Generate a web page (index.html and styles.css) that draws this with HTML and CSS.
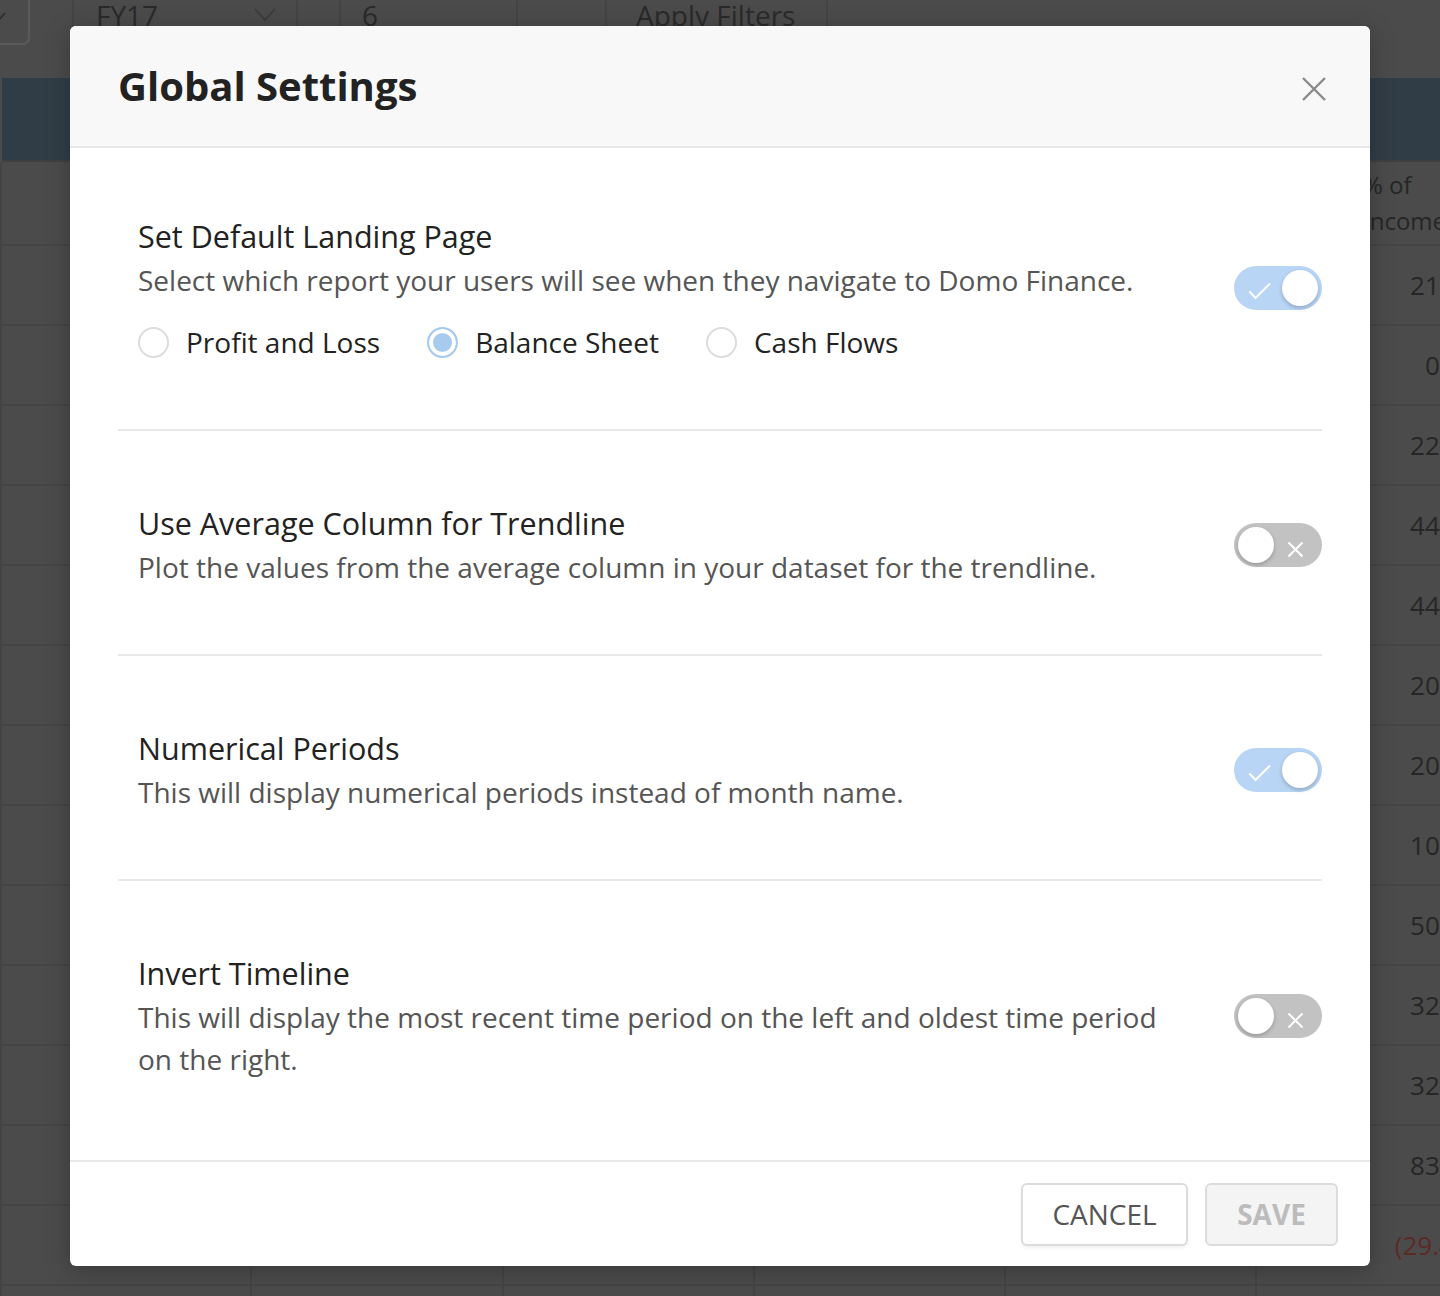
FILE: index.html
```html
<!DOCTYPE html>
<html lang="en">
<head>
<meta charset="utf-8">
<title>Global Settings</title>
<link rel="stylesheet" href="styles.css">
</head>
<body>
<div class="app">
  <div class="filters">
    <div class="f f-first"><div class="ddbox"><svg class="ddchev" width="14" height="10" viewBox="0 0 14 10"><path d="M1 1 L7 8 L13 1" fill="none" stroke="#2c2c2c" stroke-width="1.6"/></svg></div></div>
    <div class="f f-fy"><span class="ftext">FY17</span><svg class="fychev" width="22" height="14" viewBox="0 0 22 14"><path d="M1 1 L11 12 L21 1" fill="none" stroke="#3a3a3a" stroke-width="1.6"/></svg></div>
    <div class="f f-gap"></div>
    <div class="f f-num"><span class="ftext">6</span></div>
    <div class="f f-gap2"></div>
    <div class="f f-apply"><span class="ftext">Apply Filters</span></div>
  </div>
  <div class="tbar"></div>
  <div class="tbl">
    <div class="trow thead"><div class="c"></div><div class="c"></div><div class="c"></div><div class="c"></div><div class="c"></div><div class="c last head-cell">% of<br>Income</div></div>
    <div class="trow"><div class="c"></div><div class="c"></div><div class="c"></div><div class="c"></div><div class="c"></div><div class="c last">21.4%</div></div>
    <div class="trow"><div class="c"></div><div class="c"></div><div class="c"></div><div class="c"></div><div class="c"></div><div class="c last">0.2%</div></div>
    <div class="trow"><div class="c"></div><div class="c"></div><div class="c"></div><div class="c"></div><div class="c"></div><div class="c last">22.1%</div></div>
    <div class="trow"><div class="c"></div><div class="c"></div><div class="c"></div><div class="c"></div><div class="c"></div><div class="c last">44.3%</div></div>
    <div class="trow"><div class="c"></div><div class="c"></div><div class="c"></div><div class="c"></div><div class="c"></div><div class="c last">44.0%</div></div>
    <div class="trow"><div class="c"></div><div class="c"></div><div class="c"></div><div class="c"></div><div class="c"></div><div class="c last">20.5%</div></div>
    <div class="trow"><div class="c"></div><div class="c"></div><div class="c"></div><div class="c"></div><div class="c"></div><div class="c last">20.8%</div></div>
    <div class="trow"><div class="c"></div><div class="c"></div><div class="c"></div><div class="c"></div><div class="c"></div><div class="c last">10.2%</div></div>
    <div class="trow"><div class="c"></div><div class="c"></div><div class="c"></div><div class="c"></div><div class="c"></div><div class="c last">50.6%</div></div>
    <div class="trow"><div class="c"></div><div class="c"></div><div class="c"></div><div class="c"></div><div class="c"></div><div class="c last">32.3%</div></div>
    <div class="trow"><div class="c"></div><div class="c"></div><div class="c"></div><div class="c"></div><div class="c"></div><div class="c last">32.7%</div></div>
    <div class="trow"><div class="c"></div><div class="c"></div><div class="c"></div><div class="c"></div><div class="c"></div><div class="c last">83.1%</div></div>
    <div class="trow"><div class="c"></div><div class="c"></div><div class="c"></div><div class="c"></div><div class="c"></div><div class="c last neg">(29.4%)</div></div>
    <div class="trow"><div class="c"></div><div class="c"></div><div class="c"></div><div class="c"></div><div class="c"></div><div class="c last"></div></div>
  </div>
</div>

<div class="modal">
  <div class="modal-header">
    <h1 class="modal-title">Global Settings</h1>
    <svg class="close" width="26" height="26" viewBox="0 0 26 26"><path d="M2 2 L24 24 M24 2 L2 24" stroke="#8a8a8a" stroke-width="2.4" fill="none"/></svg>
  </div>
  <div class="modal-body">
    <div class="setting">
      <div class="setting-text">
        <div class="setting-title">Set Default Landing Page</div>
        <div class="setting-desc">Select which report your users will see when they navigate to Domo Finance.</div>
        <div class="radios">
          <div class="radio"><span class="radio-circle"></span><span>Profit and Loss</span></div>
          <div class="radio"><span class="radio-circle checked"></span><span>Balance Sheet</span></div>
          <div class="radio"><span class="radio-circle"></span><span>Cash Flows</span></div>
        </div>
      </div>
      <div class="toggle on"><svg class="tg-icon tg-check" width="24" height="18" viewBox="0 0 24 18"><path d="M1.5 9.5 L7.5 16 L22 1.5" fill="none" stroke="#fff" stroke-width="2"/></svg><span class="knob"></span></div>
    </div>
    <div class="setting">
      <div class="setting-text">
        <div class="setting-title">Use Average Column for Trendline</div>
        <div class="setting-desc">Plot the values from the average column in your dataset for the trendline.</div>
      </div>
      <div class="toggle off"><span class="knob"></span><svg class="tg-icon tg-x" width="17" height="17" viewBox="0 0 17 17"><path d="M1.5 1.5 L15.5 15.5 M15.5 1.5 L1.5 15.5" fill="none" stroke="#fff" stroke-width="2"/></svg></div>
    </div>
    <div class="setting">
      <div class="setting-text">
        <div class="setting-title">Numerical Periods</div>
        <div class="setting-desc">This will display numerical periods instead of month name.</div>
      </div>
      <div class="toggle on"><svg class="tg-icon tg-check" width="24" height="18" viewBox="0 0 24 18"><path d="M1.5 9.5 L7.5 16 L22 1.5" fill="none" stroke="#fff" stroke-width="2"/></svg><span class="knob"></span></div>
    </div>
    <div class="setting">
      <div class="setting-text">
        <div class="setting-title">Invert Timeline</div>
        <div class="setting-desc">This will display the most recent time period on the left and oldest time period on the right.</div>
      </div>
      <div class="toggle off"><span class="knob"></span><svg class="tg-icon tg-x" width="17" height="17" viewBox="0 0 17 17"><path d="M1.5 1.5 L15.5 15.5 M15.5 1.5 L1.5 15.5" fill="none" stroke="#fff" stroke-width="2"/></svg></div>
    </div>
  </div>
  <div class="modal-footer">
    <button class="btn btn-cancel">Cancel</button>
    <button class="btn btn-save">Save</button>
  </div>
</div>
</body>
</html>
```
FILE: styles.css
```css
* { box-sizing: border-box; }
html, body { margin: 0; padding: 0; }
body {
  width: 1440px;
  height: 1296px;
  overflow: hidden;
  position: relative;
  background: #4b4b4b;
  font-family: "Open Sans", "Noto Sans", sans-serif;
}

/* ---------- dimmed background page ---------- */
.app { width: 1440px; height: 1296px; overflow: hidden; }
.filters { display: flex; height: 78px; }
.f {
  height: 46px;
  border-right: 2px solid #444;
  display: flex;
  align-items: flex-start;
  font-size: 28px;
  line-height: 30px;
  color: #2a2a2a;
}
.f-first { width: 74px; }
.ddbox {
  width: 30px;
  height: 45px;
  border: 2px solid #5a5a5a;
  border-left: none;
  border-top: none;
  border-bottom-right-radius: 7px;
  position: relative;
  overflow: hidden;
}
.ddchev { position: absolute; left: -8px; top: 12px; }
.f-fy { width: 224px; padding-left: 22px; }
.fychev { margin-left: 96px; margin-top: 8px; }
.f-gap { width: 43px; }
.f-num { width: 177px; padding-left: 21px; }
.f-gap2 { width: 89px; }
.f-apply { width: 221px; padding-left: 29px; }

.tbar {
  height: 84px;
  margin-left: 2px;
  background: #313d46;
  border-bottom: 2px solid #404040;
}
.tbl { border-left: 2px solid #444; }
.trow { display: flex; height: 80px; border-bottom: 2px solid #444; }
.trow.thead { height: 84px; }
.c { border-right: 2px solid #444; width: 251px; flex-shrink: 0; }
.c:first-child { width: 250px; }
.c:nth-child(2) { width: 252px; }
.c.last {
  width: 262px;
  display: flex;
  align-items: center;
  justify-content: flex-end;
  padding-right: 34px;
  font-size: 26px;
  color: #262626;
}
.c.last.neg { color: #5b2a26; }
.c.last.head-cell {
  justify-content: flex-start;
  padding-left: 106px;
  padding-right: 0;
  font-size: 24px;
  line-height: 36px;
  white-space: nowrap;
}

/* ---------- modal ---------- */
.modal {
  position: absolute;
  left: 70px;
  top: 26px;
  width: 1300px;
  height: 1240px;
  background: #fff;
  border-radius: 6px;
  overflow: hidden;
  display: flex;
  flex-direction: column;
  box-shadow: 0 4px 24px rgba(0, 0, 0, 0.25);
}
.modal-header {
  flex-shrink: 0;
  height: 122px;
  background: #f8f8f8;
  border-bottom: 2px solid #e8e8e8;
  display: flex;
  align-items: center;
  justify-content: space-between;
  padding: 0 43px 0 48px;
}
.modal-title {
  margin: 0;
  font-size: 40px;
  font-weight: 700;
  color: #222;
  line-height: 1;
}
.close { display: block; margin-top: 5px; }

.modal-body { flex: 1; padding: 0 48px; }
.setting {
  display: flex;
  align-items: center;
  padding: 70px 0 66px 20px;
  border-bottom: 2px solid #e9e9e9;
}
.setting:first-child { padding-top: 66px; padding-bottom: 67px; }
.setting:last-child { border-bottom: none; }
.setting-text { flex: 1; margin-right: 50px; }
.setting-title { font-size: 30.5px; line-height: 45px; color: #222; }
.setting-desc { font-size: 28px; line-height: 42px; color: #555; }

.radios { display: flex; gap: 47px; margin-top: 21px; }
.radio {
  display: flex;
  align-items: center;
  gap: 17px;
  font-size: 28px;
  line-height: 40px;
  color: #222;
}
.radio-circle {
  width: 31px;
  height: 31px;
  border-radius: 50%;
  border: 2px solid #dddddd;
  background: #fff;
  flex-shrink: 0;
}
.radio-circle.checked {
  border-color: #a7cbee;
  background: #a7cbee;
  box-shadow: inset 0 0 0 4px #fff;
}

.toggle {
  width: 88px;
  height: 44px;
  border-radius: 22px;
  position: relative;
  flex-shrink: 0;
}
.toggle.on { background: #b8d5f6; }
.toggle.off { background: #c2c2c2; }
.knob {
  position: absolute;
  top: 4px;
  width: 36px;
  height: 36px;
  border-radius: 50%;
  background: #fff;
  box-shadow: 0 2px 4px rgba(0, 0, 0, 0.22);
}
.toggle.on .knob { right: 4px; }
.toggle.off .knob { left: 4px; }
.tg-icon { position: absolute; }
.tg-check { left: 14px; top: 16px; }
.tg-x { left: 53px; top: 18px; }

.modal-footer {
  flex-shrink: 0;
  height: 106px;
  border-top: 2px solid #e8e8e8;
  display: flex;
  justify-content: flex-end;
  align-items: center;
  gap: 17px;
  padding: 0 32px;
}
.btn {
  height: 63px;
  border: 2px solid #dcdcdc;
  border-radius: 6px;
  font-family: "Open Sans", "Noto Sans", sans-serif;
  font-size: 28px;
  text-transform: uppercase;
  padding: 0;
  cursor: pointer;
}
.btn-cancel {
  width: 167px;
  background: #fff;
  color: #555;
  box-shadow: 0 2px 3px rgba(0, 0, 0, 0.06);
}
.btn-save {
  width: 133px;
  background: #f4f4f4;
  color: #bcbcbc;
  font-weight: 700;
}
```
